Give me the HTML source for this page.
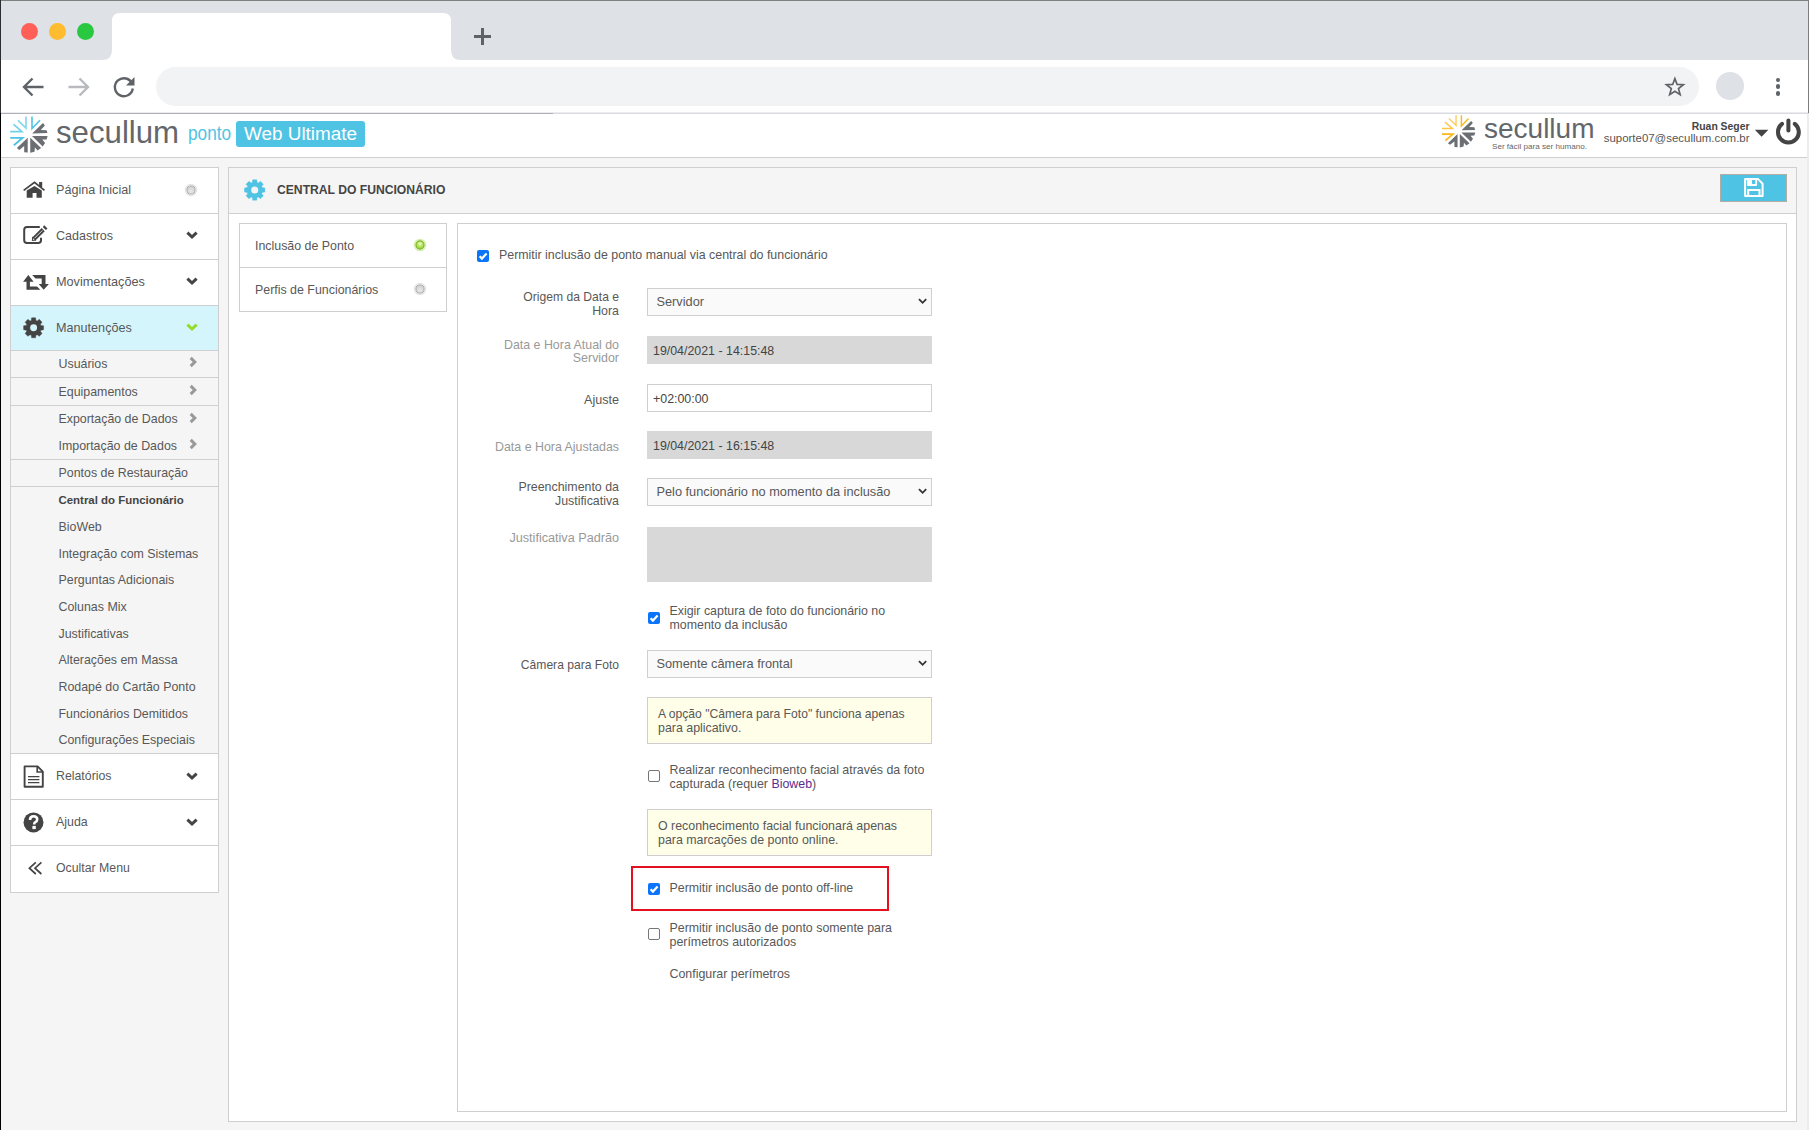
<!DOCTYPE html>
<html><head><meta charset="utf-8"><style>
html,body{margin:0;padding:0;width:1809px;height:1130px;overflow:hidden;background:#f5f5f5;}
body>div,body>svg{position:absolute;}
.t{position:absolute;font-family:"Liberation Sans",sans-serif;white-space:nowrap;}
</style></head><body>
<div style="left:0px;top:0px;width:1809px;height:60px;background:#dee1e6"></div>
<div style="left:0px;top:60px;width:1809px;height:53px;background:#fff"></div>
<div style="left:0px;top:0px;width:1809px;height:1px;background:#7f8080"></div>
<div style="left:21.0px;top:22.5px;width:17px;height:17px;background:#ff5f57;border-radius:50%"></div>
<div style="left:49.0px;top:22.5px;width:17px;height:17px;background:#febc2e;border-radius:50%"></div>
<div style="left:77.0px;top:22.5px;width:17px;height:17px;background:#28c840;border-radius:50%"></div>
<svg style="position:absolute;left:100px;top:12px;" width="364" height="49" viewBox="100 12 364 49"><path d="M102 60 Q112 60 112 50 L112 21 Q112 13 120 13 L443 13 Q451 13 451 21 L451 50 Q451 60 461 60 Z" fill="#fff"/></svg>
<div style="left:474px;top:35.3px;width:17px;height:2.6px;background:#5f6368"></div>
<div style="left:481.2px;top:28px;width:2.6px;height:17px;background:#5f6368"></div>
<svg style="position:absolute;left:20px;top:74px;" width="30" height="28" viewBox="20 74 30 28"><path d="M43.5 87 L24.5 87 M32.5 78.5 L24 87 L32.5 95.5" stroke="#5f6368" stroke-width="2.4" fill="none"/></svg>
<svg style="position:absolute;left:64px;top:74px;" width="30" height="28" viewBox="64 74 30 28"><path d="M68.5 87 L87.5 87 M79.5 78.5 L88 87 L79.5 95.5" stroke="#b9babd" stroke-width="2.4" fill="none"/></svg>
<svg style="position:absolute;left:110px;top:74px;" width="30" height="28" viewBox="110 74 30 28"><path d="M132.3 84 A9 9 0 1 0 132.8 88.5" stroke="#5f6368" stroke-width="2.4" fill="none"/><path d="M126 85.5 L134.5 85.5 L134.5 77 Z" fill="#5f6368"/></svg>
<div style="left:156px;top:67px;width:1543px;height:39px;background:#f1f3f4;border-radius:19.5px"></div>
<svg style="position:absolute;left:1662px;top:74px;" width="26" height="26" viewBox="1662 74 26 26"><path d="M1674.90 78.60 L1677.13 84.43 L1683.36 84.75 L1678.51 88.67 L1680.13 94.70 L1674.90 91.30 L1669.67 94.70 L1671.29 88.67 L1666.44 84.75 L1672.67 84.43 Z" stroke="#5f6368" stroke-width="1.7" fill="none" stroke-linejoin="miter"/></svg>
<div style="left:1716.4px;top:72.2px;width:28px;height:28px;background:#dee1e6;border-radius:50%"></div>
<div style="left:1775.6px;top:77.6px;width:4.8px;height:4.8px;background:#5f6368;border-radius:50%"></div>
<div style="left:1775.6px;top:84.39999999999999px;width:4.8px;height:4.8px;background:#5f6368;border-radius:50%"></div>
<div style="left:1775.6px;top:91.19999999999999px;width:4.8px;height:4.8px;background:#5f6368;border-radius:50%"></div>
<div style="left:0px;top:112px;width:1809px;height:1px;background:#eaecef"></div>
<div style="left:0px;top:113px;width:1809px;height:1px;background:#d9dbde"></div>
<div style="left:0px;top:113px;width:553px;height:1px;background:#afb1b4"></div>
<div style="left:0px;top:114px;width:1809px;height:43px;background:#fff"></div>
<div style="left:0px;top:157px;width:1809px;height:1px;background:#cfcfcf"></div>
<svg style="position:absolute;left:0px;top:114px;" width="60" height="43" viewBox="0 114 60 43"><path d="M18.00 120.30 L26.00 128.00 L26.00 116.60" stroke="#4fc3e3" stroke-width="1.6" fill="none" opacity="0.7"/><path d="M32.00 116.60 L32.00 128.60 L40.00 120.30" stroke="#4fc3e3" stroke-width="1.6" fill="none"/><path d="M13.60 124.30 L22.00 131.60 L10.20 131.60" stroke="#4fc3e3" stroke-width="1.6" fill="none" opacity="0.8"/><path d="M10.20 137.90 L22.50 137.90 L13.90 145.20" stroke="#4fc3e3" stroke-width="1.92" fill="none"/><path d="M32.15 133.40 L43.00 123.00 L44.90 125.40 L40.75 129.90 L46.60 130.20 L47.40 133.10 Z" fill="#6b6e72"/><path d="M32.00 136.10 L47.60 136.10 L46.60 139.40 L42.35 139.60 L45.05 142.90 L42.70 146.40 Z" fill="#6b6e72"/><path d="M27.70 137.80 L27.70 152.50 L24.20 152.20 L24.20 146.10 L19.25 149.90 L16.90 148.00 Z" fill="#6b6e72"/><path d="M30.25 137.80 L41.10 148.00 L37.60 150.60 L34.90 147.40 L34.50 151.80 L30.25 152.80 Z" fill="#6b6e72"/></svg>
<div class="t" style="left:56px;top:117px;font-size:31.2px;line-height:31.2px;color:#63666a;font-weight:normal;">secullum</div>
<div class="t" style="left:188px;top:122.80000000000001px;font-size:20.3px;line-height:20.3px;color:#4fc3e3;font-weight:normal;transform:scaleX(0.85);transform-origin:0 0">ponto</div>
<div style="left:236px;top:121px;width:129px;height:25.5px;background:#4fc3e3;border-radius:3px"></div>
<div class="t" style="left:244px;top:124.6px;font-size:18.9px;line-height:18.9px;color:#fff;font-weight:normal;">Web Ultimate</div>
<svg style="position:absolute;left:1435px;top:112px;" width="45" height="40" viewBox="1435 112 45 40"><path d="M1448.92 118.53 L1456.04 125.38 L1456.04 115.23" stroke="#fbb81b" stroke-width="1.4240000000000002" fill="none" opacity="0.7"/><path d="M1461.38 115.23 L1461.38 125.91 L1468.50 118.53" stroke="#fbb81b" stroke-width="1.4240000000000002" fill="none"/><path d="M1445.00 122.09 L1452.48 128.58 L1441.98 128.58" stroke="#fbb81b" stroke-width="1.4240000000000002" fill="none" opacity="0.8"/><path d="M1441.98 134.19 L1452.92 134.19 L1445.27 140.69" stroke="#fbb81b" stroke-width="1.7088" fill="none"/><path d="M1461.51 130.19 L1471.17 120.93 L1472.86 123.07 L1469.17 127.07 L1474.37 127.34 L1475.09 129.92 Z" fill="#6b6e72"/><path d="M1461.38 132.59 L1475.26 132.59 L1474.37 135.53 L1470.59 135.70 L1472.99 138.64 L1470.90 141.76 Z" fill="#6b6e72"/><path d="M1457.55 134.10 L1457.55 147.19 L1454.44 146.92 L1454.44 141.49 L1450.03 144.87 L1447.94 143.18 Z" fill="#6b6e72"/><path d="M1459.82 134.10 L1469.48 143.18 L1466.36 145.49 L1463.96 142.65 L1463.61 146.56 L1459.82 147.45 Z" fill="#6b6e72"/></svg>
<div class="t" style="left:1484px;top:114.5px;font-size:28px;line-height:28px;color:#63666a;font-weight:normal;">secullum</div>
<div class="t" style="left:1492px;top:143px;font-size:8.1px;line-height:8.1px;color:#666;font-weight:normal;">Ser fácil para ser humano.</div>
<div class="t" style="right:59.5px;top:122px;font-size:10.4px;line-height:10.4px;color:#444;font-weight:bold;text-align:right;">Ruan Seger</div>
<div class="t" style="right:59.5px;top:132.5px;font-size:11.45px;line-height:11.45px;color:#555;font-weight:normal;text-align:right;">suporte07@secullum.com.br</div>
<svg style="position:absolute;left:1752px;top:126px;" width="20" height="14" viewBox="1752 126 20 14"><path d="M1754.8 129.8 L1768.4 129.8 L1761.6 136.8 Z" fill="#444"/></svg>
<svg style="position:absolute;left:1772px;top:115px;" width="34" height="34" viewBox="1772 115 34 34"><path d="M1782 123.8 A10.4 10.4 0 1 0 1794.8 123.8" stroke="#444" stroke-width="4" fill="none" stroke-linecap="round"/><path d="M1788.4 120.6 L1788.4 130.4" stroke="#444" stroke-width="4" stroke-linecap="round"/></svg>
<div style="left:10px;top:167px;width:209px;height:726px;background:#fff;box-sizing:border-box;border:1px solid #cfcfcf"></div>
<div style="left:11px;top:306px;width:207px;height:44px;background:#d5f5fd"></div>
<div style="left:11px;top:351px;width:207px;height:402px;background:#f5f5f5"></div>
<div style="left:11px;top:213px;width:207px;height:1px;background:#cfcfcf"></div>
<div style="left:11px;top:259px;width:207px;height:1px;background:#cfcfcf"></div>
<div style="left:11px;top:305px;width:207px;height:1px;background:#cfcfcf"></div>
<div style="left:11px;top:350px;width:207px;height:1px;background:#cfcfcf"></div>
<div style="left:11px;top:377px;width:207px;height:1px;background:#cfcfcf"></div>
<div style="left:11px;top:405px;width:207px;height:1px;background:#cfcfcf"></div>
<div style="left:11px;top:459px;width:207px;height:1px;background:#cfcfcf"></div>
<div style="left:11px;top:486px;width:207px;height:1px;background:#cfcfcf"></div>
<div style="left:11px;top:753px;width:207px;height:1px;background:#cfcfcf"></div>
<div style="left:11px;top:799px;width:207px;height:1px;background:#cfcfcf"></div>
<div style="left:11px;top:845px;width:207px;height:1px;background:#cfcfcf"></div>
<div class="t" style="left:56px;top:184px;font-size:12.61px;line-height:12.61px;color:#585858;font-weight:normal;">Página Inicial</div>
<div class="t" style="left:56px;top:230px;font-size:12.52px;line-height:12.52px;color:#585858;font-weight:normal;">Cadastros</div>
<div class="t" style="left:56px;top:276px;font-size:12.7px;line-height:12.7px;color:#585858;font-weight:normal;">Movimentações</div>
<div class="t" style="left:56px;top:322px;font-size:12.64px;line-height:12.64px;color:#585858;font-weight:normal;">Manutenções</div>
<div class="t" style="left:56px;top:770px;font-size:12.34px;line-height:12.34px;color:#585858;font-weight:normal;">Relatórios</div>
<div class="t" style="left:56px;top:816px;font-size:12.4px;line-height:12.4px;color:#585858;font-weight:normal;">Ajuda</div>
<div class="t" style="left:56px;top:862px;font-size:12.3px;line-height:12.3px;color:#585858;font-weight:normal;">Ocultar Menu</div>
<div class="t" style="left:58.5px;top:358px;font-size:12.4px;line-height:12.4px;color:#585858;font-weight:normal;">Usuários</div>
<div class="t" style="left:58.5px;top:385.5px;font-size:12.4px;line-height:12.4px;color:#585858;font-weight:normal;">Equipamentos</div>
<div class="t" style="left:58.5px;top:413px;font-size:12.4px;line-height:12.4px;color:#585858;font-weight:normal;">Exportação de Dados</div>
<div class="t" style="left:58.5px;top:440px;font-size:12.4px;line-height:12.4px;color:#585858;font-weight:normal;">Importação de Dados</div>
<div class="t" style="left:58.5px;top:467px;font-size:12.4px;line-height:12.4px;color:#585858;font-weight:normal;">Pontos de Restauração</div>
<div class="t" style="left:58.5px;top:521px;font-size:12.4px;line-height:12.4px;color:#585858;font-weight:normal;">BioWeb</div>
<div class="t" style="left:58.5px;top:547.5px;font-size:12.4px;line-height:12.4px;color:#585858;font-weight:normal;">Integração com Sistemas</div>
<div class="t" style="left:58.5px;top:574px;font-size:12.4px;line-height:12.4px;color:#585858;font-weight:normal;">Perguntas Adicionais</div>
<div class="t" style="left:58.5px;top:601px;font-size:12.4px;line-height:12.4px;color:#585858;font-weight:normal;">Colunas Mix</div>
<div class="t" style="left:58.5px;top:627.5px;font-size:12.4px;line-height:12.4px;color:#585858;font-weight:normal;">Justificativas</div>
<div class="t" style="left:58.5px;top:654px;font-size:12.4px;line-height:12.4px;color:#585858;font-weight:normal;">Alterações em Massa</div>
<div class="t" style="left:58.5px;top:681px;font-size:12.4px;line-height:12.4px;color:#585858;font-weight:normal;">Rodapé do Cartão Ponto</div>
<div class="t" style="left:58.5px;top:707.5px;font-size:12.4px;line-height:12.4px;color:#585858;font-weight:normal;">Funcionários Demitidos</div>
<div class="t" style="left:58.5px;top:734px;font-size:12.4px;line-height:12.4px;color:#585858;font-weight:normal;">Configurações Especiais</div>
<div class="t" style="left:58.5px;top:494.5px;font-size:11.45px;line-height:11.45px;color:#444;font-weight:bold;">Central do Funcionário</div>
<svg style="position:absolute;left:183.7px;top:228.2px;" width="16" height="14" viewBox="183.7 228.2 16 14"><path d="M187.1 232.79999999999998 L191.7 237.2 L196.29999999999998 232.79999999999998" stroke="#444" stroke-width="3" fill="none"/></svg>
<svg style="position:absolute;left:183.7px;top:274px;" width="16" height="14" viewBox="183.7 274 16 14"><path d="M187.1 278.6 L191.7 283.0 L196.29999999999998 278.6" stroke="#444" stroke-width="3" fill="none"/></svg>
<svg style="position:absolute;left:183.7px;top:768.8px;" width="16" height="14" viewBox="183.7 768.8 16 14"><path d="M187.1 773.4 L191.7 777.8 L196.29999999999998 773.4" stroke="#444" stroke-width="3" fill="none"/></svg>
<svg style="position:absolute;left:183.7px;top:814.5px;" width="16" height="14" viewBox="183.7 814.5 16 14"><path d="M187.1 819.1 L191.7 823.5 L196.29999999999998 819.1" stroke="#444" stroke-width="3" fill="none"/></svg>
<svg style="position:absolute;left:183.7px;top:320px;" width="16" height="14" viewBox="183.7 320 16 14"><path d="M187.1 324.6 L191.7 329.0 L196.29999999999998 324.6" stroke="#93dc2c" stroke-width="3" fill="none"/></svg>
<svg style="position:absolute;left:186px;top:354.4px;" width="14" height="16" viewBox="186 354.4 14 16"><path d="M190.7 358.29999999999995 L194.8 362.4 L190.7 366.5" stroke="#999" stroke-width="3" fill="none"/></svg>
<svg style="position:absolute;left:186px;top:381.8px;" width="14" height="16" viewBox="186 381.8 14 16"><path d="M190.7 385.7 L194.8 389.8 L190.7 393.90000000000003" stroke="#999" stroke-width="3" fill="none"/></svg>
<svg style="position:absolute;left:186px;top:409.6px;" width="14" height="16" viewBox="186 409.6 14 16"><path d="M190.7 413.5 L194.8 417.6 L190.7 421.70000000000005" stroke="#999" stroke-width="3" fill="none"/></svg>
<svg style="position:absolute;left:186px;top:436.1px;" width="14" height="16" viewBox="186 436.1 14 16"><path d="M190.7 440.0 L194.8 444.1 L190.7 448.20000000000005" stroke="#999" stroke-width="3" fill="none"/></svg>
<svg style="position:absolute;left:183px;top:181.7px;" width="16" height="16" viewBox="183 181.7 16 16"><defs><radialGradient id="rgg189" cx="50%" cy="70%" r="60%"><stop offset="0" stop-color="#e8e8e8"/><stop offset="1" stop-color="#d2d2d2"/></radialGradient></defs><circle cx="191" cy="189.7" r="5.6" fill="none" stroke="#e4e4e4" stroke-width="1.2"/><circle cx="191" cy="189.7" r="4.1" fill="url(#rgg189)" stroke="#a9a9a9" stroke-width="1"/></svg>
<svg style="position:absolute;left:20px;top:178px;" width="30" height="24" viewBox="20 178 30 24"><path d="M23.7 190.4 L34.5 182.4 L44.5 190.4" stroke="#444" stroke-width="1.8" fill="none"/><rect x="39.1" y="182" width="3.1" height="5" fill="#444"/><path d="M26.7 190.6 L34.5 185.9 L41.8 190.6 L41.8 197.8 L36.5 197.8 L36.5 192.9 L32.6 192.9 L32.6 197.8 L26.7 197.8 Z" fill="#444"/></svg>
<svg style="position:absolute;left:20px;top:222px;" width="30" height="26" viewBox="20 222 30 26"><path d="M39.8 227 L27 227 Q24.2 227 24.2 229.8 L24.2 240.2 Q24.2 243 27 243 L38.2 243 Q41 243 41 240.2 L41 237.8" stroke="#444" stroke-width="2" fill="none"/><path d="M33.6 239.2 L43.2 229.6" stroke="#444" stroke-width="4.4"/><path d="M34.6 238.2 L42.4 230.4" stroke="#e8e8e8" stroke-width="0.9"/><path d="M44.3 228.5 L45.9 226.9" stroke="#444" stroke-width="4.4"/><path d="M31.8 241 L32.2 236.4 L36.4 240.6 Z" fill="#444"/><path d="M32.9 239.8 L33.1 238.2 L34.6 239.7 Z" fill="#fff"/></svg>
<svg style="position:absolute;left:20px;top:270px;" width="32" height="24" viewBox="20 270 32 24"><path d="M23.1 281.7 L28.3 275.1 L33.6 281.7 L29.9 281.7 L29.9 286.4 L37 286.4 L40.4 289.8 L26.5 289.8 L26.5 281.7 Z M32.2 275.1 L45.5 275.1 L45.5 283.9 L48.9 283.9 L43.7 289.8 L38.7 283.9 L41.7 283.9 L41.7 278.6 L35.5 278.6 Z" fill="#444"/></svg>
<svg style="position:absolute;left:20px;top:314px;" width="28" height="28" viewBox="20 314 28 28"><path d="M31.61 317.80 L35.59 317.80 L35.94 320.41 L37.17 320.92 L39.27 319.32 L42.08 322.13 L40.48 324.23 L40.99 325.46 L43.60 325.81 L43.60 329.79 L40.99 330.14 L40.48 331.37 L42.08 333.47 L39.27 336.28 L37.17 334.68 L35.94 335.19 L35.59 337.80 L31.61 337.80 L31.26 335.19 L30.03 334.68 L27.93 336.28 L25.12 333.47 L26.72 331.37 L26.21 330.14 L23.60 329.79 L23.60 325.81 L26.21 325.46 L26.72 324.23 L25.12 322.13 L27.93 319.32 L30.03 320.92 L31.26 320.41 Z" fill="#444" stroke="#444" stroke-width="0.4" stroke-linejoin="round"/><circle cx="33.6" cy="327.8" r="3.47" fill="#d5f5fd"/></svg>
<svg style="position:absolute;left:20px;top:762px;" width="28" height="30" viewBox="20 762 28 30"><path d="M24.6 766.4 L37.6 766.4 L42.8 771.6 L42.8 786.8 L24.6 786.8 Z" stroke="#444" stroke-width="1.9" fill="none" stroke-linejoin="round"/><path d="M37.2 766.6 L37.2 772 L42.6 772" stroke="#444" stroke-width="1.6" fill="none"/><path d="M28 776.6 L39.4 776.6 M28 779.6 L39.4 779.6 M28 782.6 L39.4 782.6" stroke="#444" stroke-width="1.4"/></svg>
<svg style="position:absolute;left:20px;top:808px;" width="28" height="28" viewBox="20 808 28 28"><circle cx="33.5" cy="822.4" r="10" fill="#444"/><path d="M30 820 Q30 816.2 33.6 816.2 Q37.2 816.2 37.2 819.4 Q37.2 821.4 35 822.4 Q34.2 822.9 34.2 824.4" stroke="#fff" stroke-width="2.6" fill="none"/><rect x="32.4" y="825.9" width="3.4" height="3.2" fill="#fff"/></svg>
<svg style="position:absolute;left:24px;top:858px;" width="22" height="20" viewBox="24 858 22 20"><path d="M35.8 862.4 L29.4 868.2 L35.8 874 M41.4 862.4 L35 868.2 L41.4 874" stroke="#444" stroke-width="1.7" fill="none"/></svg>
<div style="left:228px;top:167px;width:1569px;height:955px;background:#fff;box-sizing:border-box;border:1px solid #cfcfcf"></div>
<div style="left:229px;top:168px;width:1567px;height:45px;background:#f5f5f5"></div>
<div style="left:229px;top:213px;width:1567px;height:1px;background:#cfcfcf"></div>
<svg style="position:absolute;left:240px;top:176px;" width="30" height="28" viewBox="240 176 30 28"><path d="M252.67 179.80 L256.73 179.80 L257.08 182.46 L258.34 182.99 L260.48 181.35 L263.35 184.22 L261.71 186.36 L262.24 187.62 L264.90 187.97 L264.90 192.03 L262.24 192.38 L261.71 193.64 L263.35 195.78 L260.48 198.65 L258.34 197.01 L257.08 197.54 L256.73 200.20 L252.67 200.20 L252.32 197.54 L251.06 197.01 L248.92 198.65 L246.05 195.78 L247.69 193.64 L247.16 192.38 L244.50 192.03 L244.50 187.97 L247.16 187.62 L247.69 186.36 L246.05 184.22 L248.92 181.35 L251.06 182.99 L252.32 182.46 Z" fill="#4fc3e3" stroke="#4fc3e3" stroke-width="0.4" stroke-linejoin="round"/><circle cx="254.7" cy="190" r="3.54" fill="#f5f5f5"/></svg>
<div class="t" style="left:277px;top:183.8px;font-size:12.15px;line-height:12.15px;color:#444;font-weight:bold;">CENTRAL DO FUNCIONÁRIO</div>
<div style="left:1720px;top:174px;width:67px;height:28px;background:#4fc3e3;box-sizing:border-box;border:1px solid #b5aca5"></div>
<svg style="position:absolute;left:1740px;top:176px;" width="28" height="24" viewBox="1740 176 28 24"><path d="M1745.1 179.1 L1758.1 179.1 L1762.6 183.7 L1762.6 195.9 L1745.1 195.9 Z" stroke="#fff" stroke-width="2" fill="none" stroke-linejoin="round"/><rect x="1746.9" y="178.5" width="10.2" height="7.4" rx="0.8" fill="#fff"/><rect x="1752" y="179.9" width="3.4" height="4" rx="0.6" fill="#4fc3e3"/><rect x="1748.2" y="190" width="11.3" height="6" stroke="#fff" stroke-width="2" fill="none"/></svg>
<div style="left:239px;top:223px;width:208px;height:89px;background:#fff;box-sizing:border-box;border:1px solid #cfcfcf"></div>
<div style="left:240px;top:267px;width:206px;height:1px;background:#cfcfcf"></div>
<div class="t" style="left:255px;top:239.5px;font-size:12.4px;line-height:12.4px;color:#585858;font-weight:normal;">Inclusão de Ponto</div>
<div class="t" style="left:255px;top:283.5px;font-size:12.4px;line-height:12.4px;color:#585858;font-weight:normal;">Perfis de Funcionários</div>
<svg style="position:absolute;left:411.8px;top:237.2px;" width="16" height="16" viewBox="411.8 237.2 16 16"><defs><radialGradient id="rg" cx="50%" cy="35%" r="60%"><stop offset="0" stop-color="#f4fcd8"/><stop offset="0.45" stop-color="#bfe86a"/><stop offset="1" stop-color="#96d23a"/></radialGradient></defs><circle cx="419.8" cy="245.2" r="5.6" fill="none" stroke="#c9ea9a" stroke-width="1.4" opacity="0.8"/><circle cx="419.8" cy="245.2" r="4.1" fill="url(#rg)" stroke="#78b51f" stroke-width="1.1"/></svg>
<svg style="position:absolute;left:411.8px;top:281.3px;" width="16" height="16" viewBox="411.8 281.3 16 16"><defs><radialGradient id="rgg289" cx="50%" cy="70%" r="60%"><stop offset="0" stop-color="#e8e8e8"/><stop offset="1" stop-color="#d2d2d2"/></radialGradient></defs><circle cx="419.8" cy="289.3" r="5.6" fill="none" stroke="#e4e4e4" stroke-width="1.2"/><circle cx="419.8" cy="289.3" r="4.1" fill="url(#rgg289)" stroke="#a9a9a9" stroke-width="1"/></svg>
<div style="left:457px;top:223px;width:1330px;height:889px;background:#fff;box-sizing:border-box;border:1px solid #cfcfcf"></div>
<div style="left:477px;top:250px;width:12px;height:12px;border-radius:2px;background:#0b74fa"></div>
<svg style="position:absolute;left:477px;top:250px;" width="12" height="12" viewBox="477 250 12 12"><path d="M479.6 256.2 L481.9 258.6 L486.6 253.4" stroke="#fff" stroke-width="2.2" fill="none"/></svg>
<div class="t" style="left:499px;top:248.8px;font-size:12.4px;line-height:12.4px;color:#585858;font-weight:normal;">Permitir inclusão de ponto manual via central do funcionário</div>
<div style="left:647px;top:288px;width:285px;height:27.5px;background:#fafafa;box-sizing:border-box;border:1px solid #cfcfcf"></div>
<svg style="position:absolute;left:912px;top:294px;" width="20" height="16" viewBox="912 294 20 16"><path d="M919 299.2 L922.6 302.8 L926.2 299.2" stroke="#333" stroke-width="1.8" fill="none"/></svg>
<div class="t" style="left:656.5px;top:296px;font-size:12.76px;line-height:12.76px;color:#585858;font-weight:normal;">Servidor</div>
<div class="t" style="right:1190px;top:291px;font-size:12.13px;line-height:12.13px;color:#585858;font-weight:normal;text-align:right;">Origem da Data e</div>
<div class="t" style="right:1190px;top:304.5px;font-size:12.4px;line-height:12.4px;color:#585858;font-weight:normal;text-align:right;">Hora</div>
<div style="left:647px;top:336px;width:285px;height:27.5px;background:#d8d8d8"></div>
<div class="t" style="left:653px;top:345px;font-size:12.4px;line-height:12.4px;color:#444;font-weight:normal;">19/04/2021 - 14:15:48</div>
<div class="t" style="right:1190px;top:338.5px;font-size:12.4px;line-height:12.4px;color:#999;font-weight:normal;text-align:right;">Data e Hora Atual do</div>
<div class="t" style="right:1190px;top:352px;font-size:12.4px;line-height:12.4px;color:#999;font-weight:normal;text-align:right;">Servidor</div>
<div style="left:647px;top:384px;width:285px;height:27.5px;background:#fff;box-sizing:border-box;border:1px solid #cfcfcf"></div>
<div class="t" style="left:653px;top:393px;font-size:12.4px;line-height:12.4px;color:#444;font-weight:normal;">+02:00:00</div>
<div class="t" style="right:1190px;top:393.5px;font-size:12.6px;line-height:12.6px;color:#585858;font-weight:normal;text-align:right;">Ajuste</div>
<div style="left:647px;top:431px;width:285px;height:27.5px;background:#d8d8d8"></div>
<div class="t" style="left:653px;top:440px;font-size:12.4px;line-height:12.4px;color:#444;font-weight:normal;">19/04/2021 - 16:15:48</div>
<div class="t" style="right:1190px;top:440.5px;font-size:12.4px;line-height:12.4px;color:#999;font-weight:normal;text-align:right;">Data e Hora Ajustadas</div>
<div style="left:647px;top:478px;width:285px;height:27.5px;background:#fafafa;box-sizing:border-box;border:1px solid #cfcfcf"></div>
<svg style="position:absolute;left:912px;top:484px;" width="20" height="16" viewBox="912 484 20 16"><path d="M919 489.2 L922.6 492.8 L926.2 489.2" stroke="#333" stroke-width="1.8" fill="none"/></svg>
<div class="t" style="left:656.5px;top:486px;font-size:12.76px;line-height:12.76px;color:#585858;font-weight:normal;">Pelo funcionário no momento da inclusão</div>
<div class="t" style="right:1190px;top:481px;font-size:12.4px;line-height:12.4px;color:#585858;font-weight:normal;text-align:right;">Preenchimento da</div>
<div class="t" style="right:1190px;top:494.8px;font-size:12.4px;line-height:12.4px;color:#585858;font-weight:normal;text-align:right;">Justificativa</div>
<div style="left:647px;top:527px;width:285px;height:55px;background:#d8d8d8"></div>
<div class="t" style="right:1190px;top:532px;font-size:12.65px;line-height:12.65px;color:#999;font-weight:normal;text-align:right;">Justificativa Padrão</div>
<div style="left:647.5px;top:611.5px;width:12px;height:12px;border-radius:2px;background:#0b74fa"></div>
<svg style="position:absolute;left:647.5px;top:611.5px;" width="12" height="12" viewBox="647.5 611.5 12 12"><path d="M650.1 617.7 L652.4 620.1 L657.1 614.9" stroke="#fff" stroke-width="2.2" fill="none"/></svg>
<div class="t" style="left:669.5px;top:605px;font-size:12.4px;line-height:12.4px;color:#585858;font-weight:normal;">Exigir captura de foto do funcionário no</div>
<div class="t" style="left:669.5px;top:618.5px;font-size:12.4px;line-height:12.4px;color:#585858;font-weight:normal;">momento da inclusão</div>
<div style="left:647px;top:650px;width:285px;height:27.5px;background:#fafafa;box-sizing:border-box;border:1px solid #cfcfcf"></div>
<svg style="position:absolute;left:912px;top:656px;" width="20" height="16" viewBox="912 656 20 16"><path d="M919 661.2 L922.6 664.8 L926.2 661.2" stroke="#333" stroke-width="1.8" fill="none"/></svg>
<div class="t" style="left:656.5px;top:658.3px;font-size:12.76px;line-height:12.76px;color:#585858;font-weight:normal;">Somente câmera frontal</div>
<div class="t" style="right:1190px;top:658.5px;font-size:12.1px;line-height:12.1px;color:#585858;font-weight:normal;text-align:right;">Câmera para Foto</div>
<div style="left:647px;top:696.5px;width:285px;height:47px;background:#fefee9;box-sizing:border-box;border:1px solid #cfcfcf"></div>
<div class="t" style="left:658px;top:708px;font-size:12.14px;line-height:12.14px;color:#585858;font-weight:normal;">A opção "Câmera para Foto" funciona apenas</div>
<div class="t" style="left:658px;top:721.5px;font-size:12.4px;line-height:12.4px;color:#585858;font-weight:normal;">para aplicativo.</div>
<div style="left:647.5px;top:770.2px;width:12px;height:12px;border-radius:2px;box-sizing:border-box;border:1px solid #767676;background:#fff"></div>
<div class="t" style="left:669.5px;top:764px;font-size:12.4px;line-height:12.4px;color:#585858;font-weight:normal;">Realizar reconhecimento facial através da foto</div>
<div class="t" style="left:669.5px;top:777.5px;font-size:12.4px;line-height:12.4px;color:#585858;font-weight:normal;">capturada (requer <span style="color:#5b2d8e">Bioweb</span>)</div>
<div style="left:647px;top:808.5px;width:285px;height:47px;background:#fefee9;box-sizing:border-box;border:1px solid #cfcfcf"></div>
<div class="t" style="left:658px;top:819.7px;font-size:12.4px;line-height:12.4px;color:#585858;font-weight:normal;">O reconhecimento facial funcionará apenas</div>
<div class="t" style="left:658px;top:833.5px;font-size:12.4px;line-height:12.4px;color:#585858;font-weight:normal;">para marcações de ponto online.</div>
<div style="left:630.5px;top:866px;width:258.5px;height:45px;box-sizing:border-box;border:2px solid #e3101f"></div>
<div style="left:647.5px;top:882.8px;width:12px;height:12px;border-radius:2px;background:#0b74fa"></div>
<svg style="position:absolute;left:647.5px;top:882.8px;" width="12" height="12" viewBox="647.5 882.8 12 12"><path d="M650.1 889.0 L652.4 891.4 L657.1 886.1999999999999" stroke="#fff" stroke-width="2.2" fill="none"/></svg>
<div class="t" style="left:669.5px;top:882px;font-size:12.4px;line-height:12.4px;color:#585858;font-weight:normal;">Permitir inclusão de ponto off-line</div>
<div style="left:647.5px;top:928.2px;width:12px;height:12px;border-radius:2px;box-sizing:border-box;border:1px solid #767676;background:#fff"></div>
<div class="t" style="left:669.5px;top:922px;font-size:12.4px;line-height:12.4px;color:#585858;font-weight:normal;">Permitir inclusão de ponto somente para</div>
<div class="t" style="left:669.5px;top:935.5px;font-size:12.4px;line-height:12.4px;color:#585858;font-weight:normal;">perímetros autorizados</div>
<div class="t" style="left:669.5px;top:967.8px;font-size:12.4px;line-height:12.4px;color:#585858;font-weight:normal;">Configurar perímetros</div>
<div style="left:0px;top:0px;width:1px;height:113px;background:#2b2e2e"></div>
<div style="left:0px;top:113px;width:1px;height:1017px;background:#000"></div>
<div style="left:1808px;top:0px;width:1px;height:113px;background:#7a7d7e"></div>
<div style="left:1807px;top:114px;width:2px;height:1016px;background:#ececec"></div>
</body></html>
